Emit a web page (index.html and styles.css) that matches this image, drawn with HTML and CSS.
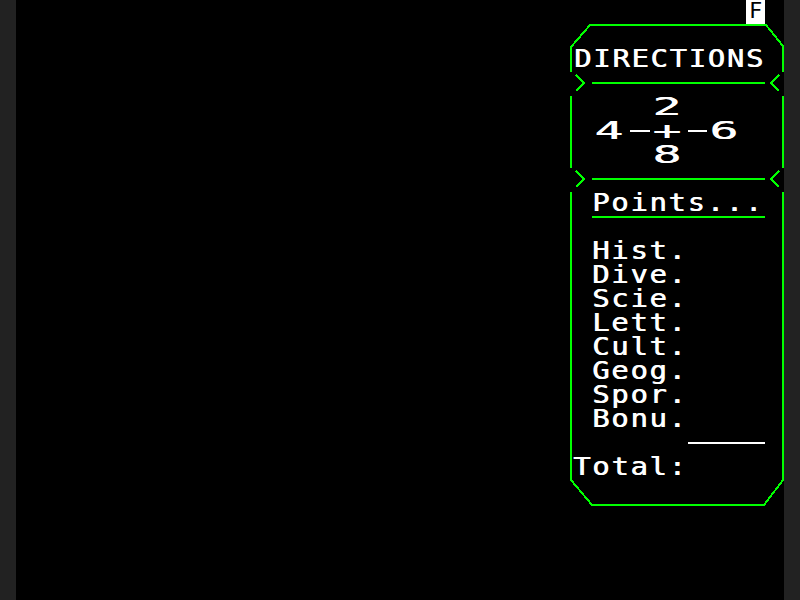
FILE: index.html
```html
<!DOCTYPE html>
<html lang="fr">
<head>
<meta charset="utf-8">
<title>Directions</title>
<link rel="stylesheet" href="styles.css">
</head>
<body>
<div class="screen">
  <div class="status"><span class="fkey">F</span></div>
  <div class="panel">
    <svg class="cap" width="214" height="24" viewBox="0 0 214 24"><path d="M1 24 V23 L20 1 H196 L213 22 V24" /></svg>
    <div class="sec"><div class="row title"><span class="t">DIRECTIONS</span></div></div>
    <svg class="cap" width="214" height="24" viewBox="0 0 214 24"><path d="M6 3 L14 11 L6 19" /><path d="M22 11 H195" /><path d="M209 3 L201 11 L209 19" /></svg>
    <div class="sec compass">
      <div class="row"><span class="gap g4"></span><span class="dw">2</span></div>
      <div class="row"><span class="gap g1"></span><span class="dw">4</span><span class="dash"></span><span class="dw">+</span><span class="dash"></span><span class="dw">6</span></div>
      <div class="row"><span class="gap g4"></span><span class="dw">8</span></div>
    </div>
    <svg class="cap" width="214" height="24" viewBox="0 0 214 24"><path d="M6 3 L14 11 L6 19" /><path d="M22 11 H195" /><path d="M209 3 L201 11 L209 19" /></svg>
    <div class="sec scores">
      <div class="row points"><span class="t">Points...</span></div>
      <div class="row"></div>
      <div class="row ind"><span class="t">Hist.</span></div>
      <div class="row ind"><span class="t">Dive.</span></div>
      <div class="row ind"><span class="t">Scie.</span></div>
      <div class="row ind"><span class="t">Lett.</span></div>
      <div class="row ind"><span class="t">Cult.</span></div>
      <div class="row ind"><span class="t">Geog.</span></div>
      <div class="row ind"><span class="t">Spor.</span></div>
      <div class="row ind"><span class="t">Bonu.</span></div>
      <div class="row"><span class="sum"></span></div>
      <div class="row total"><span class="t">Total:</span></div>
    </div>
    <svg class="cap" width="214" height="26" viewBox="0 0 214 26"><path d="M1 0 L22 25 H194 L213 0" /></svg>
  </div>
</div>
</body>
</html>
```
FILE: styles.css
```css
html, body {
  margin: 0;
  padding: 0;
  background: #222;
}
.screen {
  width: 768px;
  height: 600px;
  margin: 0 16px;
  background: #000;
  display: flex;
  flex-direction: column;
  align-items: flex-end;
  font-family: "DejaVu Sans Mono", "Liberation Mono", monospace;
  font-size: 24px;
  color: #fff;
}
.status {
  height: 24px;
  display: flex;
  justify-content: flex-end;
}
.fkey {
  display: block;
  width: 19px;
  height: 21px;
  padding-bottom: 3px;
  margin-right: 19px;
  background: #fff;
  color: #000;
  font-size: 22px;
  line-height: 21px;
  text-align: center;
}
.panel {
  width: 214px;
  display: flex;
  flex-direction: column;
}
.cap {
  display: block;
}
.cap path {
  fill: none;
  stroke: #0f0;
  stroke-width: 2;
  shape-rendering: crispEdges;
}
.sec {
  border-left: 2px solid #0f0;
  border-right: 2px solid #0f0;
}
.row {
  height: 24px;
  line-height: 22px;
  white-space: pre;
  display: flex;
}
.t {
  display: block;
  letter-spacing: 1.45px;
  transform: scaleX(1.2);
  transform-origin: 0 0;
  text-shadow: 0.6px 0 #fff;
}
.title {
  padding-left: 1.5px;
}
.ind {
  padding-left: 20.2px;
}
.total {
  padding-left: 0.5px;
}
.points {
  margin-left: 20px;
  width: 172.8px;
  border-bottom: 2px solid #0f0;
  margin-bottom: -2px;
  position: relative;
  z-index: 1;
}
.points .t {
  margin-left: 0.2px;
}
.gap {
  display: block;
}
.g1 { width: 20px; }
.g4 { width: 77.6px; }
.dw {
  display: block;
  width: 38.4px;
  text-align: center;
  transform: translateX(-2.5px) scaleX(2);
  transform-origin: 19.2px 0;
  text-shadow: 0.4px 0 #fff;
}
.dash {
  display: block;
  width: 19.2px;
  height: 24px;
  background: linear-gradient(#fff, #fff) 0 10px / 100% 2px no-repeat;
}
.sum {
  display: block;
  margin-left: 116px;
  width: 76.8px;
  height: 24px;
  background: linear-gradient(#fff, #fff) 0 10px / 100% 2px no-repeat;
}
```
